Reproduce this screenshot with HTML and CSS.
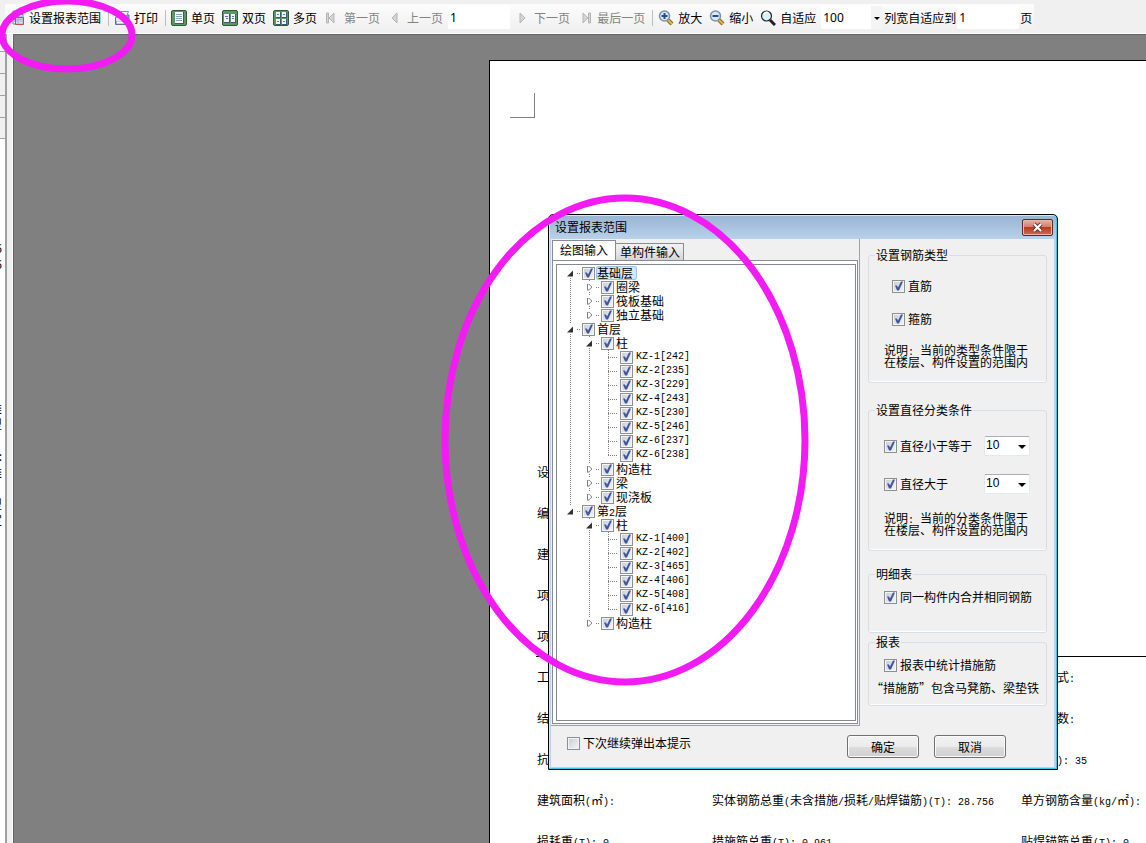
FILE: index.html
```html
<!DOCTYPE html>
<html lang="zh-CN">
<head>
<meta charset="utf-8">
<title>设置报表范围</title>
<link rel="stylesheet" href="styles.css">
</head>
<body>
<div class="app">
  <header class="toolbar">
    <div class="strip">
      <button class="tool"><svg width="14" height="16" viewBox="0 0 14 16"><path d="M3 1h10v13H3z" fill="#e9f0f8" stroke="#6f88a8"/><path d="M1 6h12v6H1z" fill="#a9bfda"/><path d="M3 4.500h10M0 9.500h13M8 1v14" stroke="#6f88a8"/><path d="M5.500 7.500h8v7h-8z" fill="#c9d3e6" fill-opacity=".6" stroke="#d04848"/></svg>设置报表范围</button>
      <span class="sep"></span>
      <button class="tool"><svg width="16" height="16" viewBox="0 0 16 16"><path d="M1.500 7.500 4 5h11v6l-3 3.500H1.500z" fill="#8fa3cc" stroke="#5d7199"/><path d="M4.500 7 7 1.500h7.500L12 7z" fill="#fff" stroke="#7d8fae"/><path d="M2 8h10v3H2z" fill="#dfe7f4"/><path d="M3 12.500h8" stroke="#fff" stroke-width="2"/></svg>打印</button>
      <span class="sep"></span>
      <button class="tool"><svg width="16" height="16" viewBox="0 0 16 16"><rect x=".5" y=".5" width="15" height="15" rx="1.500" fill="#5f9560" stroke="#2c5a34"/><path d="M4 2h9v12H4z" fill="#40566e"/><path d="M4 2h8v11H4z" fill="#fff"/><path d="M5 4.500h6M5 6.500h6M5 8.500h6M5 10.500h6" stroke="#8ba0c8"/></svg>单页</button>
      <button class="tool"><svg width="16" height="16" viewBox="0 0 16 16"><rect x=".5" y=".5" width="15" height="15" rx="1.500" fill="#5f9560" stroke="#2c5a34"/><path d="M2 4h6v9H2zM9 4h5v9H9z" fill="#40566e"/><path d="M2 4h5v8H2zM9 4h4v8H9z" fill="#eef2fb"/><path d="M3 6.500h3M4 8.500h2M10 6.500h2M10 8.500h2" stroke="#5c74a8"/></svg>双页</button>
      <button class="tool"><svg width="16" height="16" viewBox="0 0 16 16"><rect x=".5" y=".5" width="15" height="15" rx="1.500" fill="#5f9560" stroke="#2c5a34"/><path d="M3 2h5v6H3zM9 2h5v6H9zM3 9h5v6H3zM9 9h5v6H9z" fill="#40566e"/><path d="M3 2h4v5H3zM9 2h4v5H9zM3 9h4v5H3zM9 9h4v5H9z" fill="#eef2fb"/><path d="M4 4.500h2M10 4.500h2M4 11.500h2M10 11.500h2" stroke="#5c74a8"/></svg>多页</button>
      <button class="tool" disabled><svg width="16" height="16" viewBox="0 0 16 16"><path d="M2.500 3h2v10h-2zM10 3v10L5 8z" fill="#d4d4d4" stroke="#b5b5b5"/></svg>第一页</button>
      <button class="tool" disabled><svg width="16" height="16" viewBox="0 0 16 16"><path d="M10 3v10L5 8z" fill="#d4d4d4" stroke="#b5b5b5"/></svg>上一页</button>
      <input class="num" type="text" value="1" aria-label="页码">
      <button class="tool" disabled><svg width="16" height="16" viewBox="0 0 16 16"><path d="M6 3v10l5-5z" fill="#d4d4d4" stroke="#b5b5b5"/></svg>下一页</button>
      <button class="tool" disabled><svg width="16" height="16" viewBox="0 0 16 16"><path d="M6 3v10l5-5zM11.500 3h2v10h-2z" fill="#d4d4d4" stroke="#b5b5b5"/></svg>最后一页</button>
      <span class="sep"></span>
      <button class="tool"><svg width="16" height="16" viewBox="0 0 16 16"><path d="m10 10 4 4" stroke="#8a6a1c" stroke-width="4"/><path d="m10 10 4 4" stroke="#e2b94a" stroke-width="2"/><circle cx="6.500" cy="6" r="5" fill="#dbe8f8" stroke="#7a90b0" stroke-width="1.500"/><path d="M3.500 6h6M6.500 3v6" stroke="#2c4a86" stroke-width="2"/></svg>放大</button>
      <button class="tool"><svg width="16" height="16" viewBox="0 0 16 16"><path d="m10 10 4 4" stroke="#8a6a1c" stroke-width="4"/><path d="m10 10 4 4" stroke="#e2b94a" stroke-width="2"/><circle cx="6.500" cy="6" r="5" fill="#dbe8f8" stroke="#7a90b0" stroke-width="1.500"/><path d="M3.500 6h6" stroke="#2c4a86" stroke-width="2"/></svg>缩小</button>
      <button class="tool"><svg width="16" height="16" viewBox="0 0 16 16"><path d="m10 10 5 5" stroke="#222" stroke-width="3"/><circle cx="6.500" cy="6" r="5" fill="#d8f1fb" stroke="#222" stroke-width="1.200"/><path d="M4 4c1-2 3-2 4-1" stroke="#fff" fill="none" stroke-width="1.500"/></svg>自适应</button>
      <span class="combo zoom"><select aria-label="缩放比例"><option>100</option></select></span>
      <label class="fit">列宽自适应到<input class="num" type="text" value="1"><span>页</span></label>
    </div>
  </header>

  <div class="workspace">
    <aside class="side">
      <div class="heads"><i></i><i></i><i></i><i></i></div>
      <div class="entries">
        <span>6</span><span>6</span><span class="far">类</span><span>型</span><span class="next">:</span><span>类</span><span class="next">型</span><span>定</span>
      </div>
    </aside>
    <main class="viewport">
      <article class="page">
        <div class="corner"></div>
        <div class="rows head">
          <div class="row"><span>设</span></div>
          <div class="row"><span>编</span></div>
          <div class="row"><span>建</span></div>
          <div class="row"><span>项</span></div>
          <div class="row"><span>项</span></div>
        </div>
        <div class="rows">
          <div class="row"><span>工</span><span></span><span class="tail">式<b>:</b></span></div>
          <div class="row"><span>结</span><span></span><span class="tail">数<b>:</b></span></div>
          <div class="row"><span>抗</span><span></span><span class="tail"><b>): 35</b></span></div>
          <div class="row"><span>建筑面积<b>(</b>㎡<b>):</b></span><span>实体钢筋总重<b>(</b>未含措施<b>/</b>损耗<b>/</b>贴焊锚筋<b>)(T): 28.756</b></span><span>单方钢筋含量<b>(kg/</b>㎡<b>):</b></span></div>
          <div class="row"><span>损耗重<b>(T): 0</b></span><span>措施筋总重<b>(T): 0.961</b></span><span>贴焊锚筋总重<b>(T): 0</b></span></div>
        </div>
      </article>
    </main>
  </div>
</div>

<section class="dialog" role="dialog" aria-labelledby="dlg-title">
  <header class="titlebar">
    <h1 id="dlg-title">设置报表范围</h1>
    <button class="close" aria-label="关闭"><svg width="13" height="11" viewBox="0 0 13 11"><path d="m3 2 7 7M10 2 3 9" stroke="#5c3b3b" stroke-width="4"/><path d="m3 2 7 7M10 2 3 9" stroke="#fff" stroke-width="2"/></svg></button>
  </header>
  <div class="client">
    <div class="panes">
      <div class="left">
        <div class="tabs" role="tablist">
          <button class="tab on" role="tab" aria-selected="true">绘图输入</button>
          <button class="tab" role="tab" aria-selected="false">单构件输入</button>
        </div>
        <div class="tabpage">
          <ul class="tree">
            <li><div class="node"><i class="open"></i><label><input type="checkbox" checked><span class="sel">基础层</span></label></div>
              <ul>
                <li><div class="node"><i class="shut"></i><label><input type="checkbox" checked><span>圈梁</span></label></div></li>
                <li><div class="node"><i class="shut"></i><label><input type="checkbox" checked><span>筏板基础</span></label></div></li>
                <li><div class="node"><i class="shut"></i><label><input type="checkbox" checked><span>独立基础</span></label></div></li>
              </ul>
            </li>
            <li><div class="node"><i class="open"></i><label><input type="checkbox" checked><span>首层</span></label></div>
              <ul>
                <li><div class="node"><i class="open"></i><label><input type="checkbox" checked><span>柱</span></label></div>
                  <ul>
                    <li><div class="node leaf"><label><input type="checkbox" checked><b>KZ-1[242]</b></label></div></li>
                    <li><div class="node leaf"><label><input type="checkbox" checked><b>KZ-2[235]</b></label></div></li>
                    <li><div class="node leaf"><label><input type="checkbox" checked><b>KZ-3[229]</b></label></div></li>
                    <li><div class="node leaf"><label><input type="checkbox" checked><b>KZ-4[243]</b></label></div></li>
                    <li><div class="node leaf"><label><input type="checkbox" checked><b>KZ-5[230]</b></label></div></li>
                    <li><div class="node leaf"><label><input type="checkbox" checked><b>KZ-5[246]</b></label></div></li>
                    <li><div class="node leaf"><label><input type="checkbox" checked><b>KZ-6[237]</b></label></div></li>
                    <li><div class="node leaf"><label><input type="checkbox" checked><b>KZ-6[238]</b></label></div></li>
                  </ul>
                </li>
                <li><div class="node"><i class="shut"></i><label><input type="checkbox" checked><span>构造柱</span></label></div></li>
                <li><div class="node"><i class="shut"></i><label><input type="checkbox" checked><span>梁</span></label></div></li>
                <li><div class="node"><i class="shut"></i><label><input type="checkbox" checked><span>现浇板</span></label></div></li>
              </ul>
            </li>
            <li><div class="node"><i class="open"></i><label><input type="checkbox" checked><span>第<b>2</b>层</span></label></div>
              <ul>
                <li><div class="node"><i class="open"></i><label><input type="checkbox" checked><span>柱</span></label></div>
                  <ul>
                    <li><div class="node leaf"><label><input type="checkbox" checked><b>KZ-1[400]</b></label></div></li>
                    <li><div class="node leaf"><label><input type="checkbox" checked><b>KZ-2[402]</b></label></div></li>
                    <li><div class="node leaf"><label><input type="checkbox" checked><b>KZ-3[465]</b></label></div></li>
                    <li><div class="node leaf"><label><input type="checkbox" checked><b>KZ-4[406]</b></label></div></li>
                    <li><div class="node leaf"><label><input type="checkbox" checked><b>KZ-5[408]</b></label></div></li>
                    <li><div class="node leaf"><label><input type="checkbox" checked><b>KZ-6[416]</b></label></div></li>
                  </ul>
                </li>
                <li><div class="node"><i class="shut"></i><label><input type="checkbox" checked><span>构造柱</span></label></div></li>
              </ul>
            </li>
          </ul>
        </div>
      </div>

      <div class="right">
        <fieldset class="group steel">
          <legend>设置钢筋类型</legend>
          <label class="check"><input type="checkbox" checked>直筋</label>
          <label class="check"><input type="checkbox" checked>箍筋</label>
          <p>说明<b>: </b>当前的类型条件限于<br>在楼层、构件设置的范围内</p>
        </fieldset>
        <fieldset class="group diameter">
          <legend>设置直径分类条件</legend>
          <div class="line"><label class="check"><input type="checkbox" checked>直径小于等于</label><span class="combo"><select aria-label="直径小于等于"><option>10</option></select></span></div>
          <div class="line"><label class="check"><input type="checkbox" checked>直径大于</label><span class="combo"><select aria-label="直径大于"><option>10</option></select></span></div>
          <p>说明<b>: </b>当前的分类条件限于<br>在楼层、构件设置的范围内</p>
        </fieldset>
        <fieldset class="group detail">
          <legend>明细表</legend>
          <label class="check"><input type="checkbox" checked>同一构件内合并相同钢筋</label>
        </fieldset>
        <fieldset class="group report">
          <legend>报表</legend>
          <label class="check"><input type="checkbox" checked>报表中统计措施筋</label>
          <p>“措施筋”包含马凳筋、梁垫铁</p>
        </fieldset>
      </div>
    </div>
    <footer class="actions">
      <label class="check"><input type="checkbox">下次继续弹出本提示</label>
      <button class="push">确定</button>
      <button class="push">取消</button>
    </footer>
  </div>
</section>

<svg class="marks" width="1146" height="843" viewBox="0 0 1146 843" aria-hidden="true">
  <ellipse cx="67" cy="35" rx="65" ry="34"/>
  <ellipse cx="625" cy="440" rx="180" ry="242"/>
</svg>
</body>
</html>
```
FILE: styles.css
```css
* { box-sizing: border-box; }
html, body { height: 100%; }
body, button, input, select {
  font-family: "Noto Sans CJK SC", sans-serif;
  font-size: 12px;
  line-height: 16px;
  color: #000;
}
body { margin: 0; overflow: hidden; background: #f0f0f0; }
button, input, select { margin: 0; padding: 0; border: 0; border-radius: 0; }
ul, p, h1 { margin: 0; padding: 0; list-style: none; font-size: 12px; font-weight: 400; }
b { font: 400 10px/0 "Liberation Mono", monospace; white-space: pre; }
svg { display: block; flex: none; }

.app { display: flex; flex-direction: column; height: 100vh; }

/* toolbar */
.toolbar { flex: none; height: 34px; padding: 4px 0 0 5px; border-bottom: 1px solid #fff; }
.strip {
  display: inline-flex; align-items: center; height: 27px; padding: 0 2px 0 5px;
  background: linear-gradient(#fdfdfd, #efefef); white-space: nowrap;
}
.tool { display: flex; align-items: center; gap: 4px; flex: none; background: none; }
.tool:first-child { gap: 5px; }
.tool:disabled { color: #838383; }
.tool + .tool { margin-left: 7px; }
.sep { width: 1px; height: 16px; margin: 0 5px 0 7px; background: #bdbdbd; }
.num { width: 62px; height: 23px; padding: 0 2px; margin: 0 4px 0 5px; background: #fff; font-family: "Noto Sans", sans-serif; }
.fit { display: flex; align-items: center; }
.fit .num { margin: 0 1px 0 1px; }

.combo { position: relative; display: block; flex: none; }
.combo select {
  appearance: none; width: 46px; height: 20px; padding: 0 1px 2px; background: #fff;
  border: 1px solid #e3e9ef; border-top-color: #abadb3; border-radius: 2px;
  line-height: 16px; font-family: "Liberation Sans", sans-serif;
}
.combo::after {
  content: ""; position: absolute; right: 4px; top: 9px; pointer-events: none;
  border: 4px solid transparent; border-top-color: #000; border-bottom: 0;
}
.zoom { margin: 0 1px 0 5px; }
.zoom select {
  width: 62px; height: 23px; padding: 0 2px; border: 0; font-family: "Noto Sans", sans-serif;
  background: linear-gradient(90deg, #fff 50px, #f4f4f4 50px);
}
.zoom::after { right: 3px; top: 11px; border-width: 3px; border-bottom: 0; }

/* workspace */
.workspace { display: flex; flex: 1; min-height: 0; }
.side { flex: none; width: 7px; margin-right: 6px; border-right: 2px solid #a0a0a0; background: #fff; overflow: hidden; }
.heads { padding-top: 17px; background: #f0f0f0; }
.heads i { display: block; height: 22px; border-top: 1px solid #a0a0a0; }
.heads i:last-child { border-bottom: 1px solid #a0a0a0; }
.entries { display: flex; flex-direction: column; align-items: flex-end; padding: 101px 3px 0 0; }
.entries .far { margin-top: 128px; }
.entries .next { margin-top: 16px; }
.viewport {
  flex: 1; min-width: 0; padding: 25px 0 0 475px; overflow: hidden;
  background: #808080; border: 1px solid #646464; border-width: 1px 0 0 1px;
  box-shadow: -1px 0 #fff;
}

/* printed page */
.page { min-height: 100%; border: 1px solid #000; border-width: 1px 0 0 1px; background: #fff; }
.page::before { content: ""; display: block; height: 32px; }
.corner { width: 25px; height: 25px; margin: 0 0 333px 20px; border: 1px solid #808080; border-width: 0 1px 1px 0; }
.rows { margin-left: 46px; padding-left: 1px; }
.rows.head { border-bottom: 1px solid #000; }
.row { display: grid; grid-template-columns: 175px 309px 1fr; align-items: center; height: 41px; white-space: nowrap; }
.head + .rows .row:first-child { height: 40px; }
.tail { padding-left: 36px; }

/* dialog */
.dialog {
  position: absolute; left: 548px; top: 214px; width: 510px; padding: 0 3px 2px 2px;
  border: 1px solid #000; border-radius: 5px 5px 0 0;
  background: linear-gradient(#98b4d1, #b9d1ea 24px);
  box-shadow: inset -1px -1px #2fc8ee, inset 1px 1px #d5e5f5;
}
.titlebar { display: flex; align-items: center; justify-content: space-between; height: 24px; padding: 0 1px 0 4px; }
.close {
  display: flex; align-items: center; justify-content: center; width: 31px; height: 17px;
  border: 1px solid #592a28; border-radius: 2px;
  background: linear-gradient(#e9b0a3, #d4806c 45%, #b93a1e 50%, #d06a4c);
  box-shadow: inset 0 0 0 1px #e8b8ac;
}
.client { background: #f0f0f0; }
.panes { display: flex; }
.left {
  display: flex; flex-direction: column; flex: 1; padding: 1px;
  border: 1px solid #a0a0a0; border-width: 0 1px 1px 0;
}
.tabs { display: flex; align-items: flex-end; height: 20px; }
.tab {
  height: 17px; padding: 0 3px 1px 4px; border: 1px solid #898c95; border-left: 0; border-bottom: 0;
  background: linear-gradient(#f2f2f2, #e6e6e6 50%, #d4d4d4); line-height: 15px;
}
.tab.on { height: 20px; padding: 0 7px 2px; border-left: 1px solid #898c95; background: #fff; }
.tabpage {
  display: flex; flex: 1; padding: 3px 1px 2px 3px; background: #fff;
  border: 1px solid #898c95;
}
.tree { flex: 1; padding: 1px 0 0 10px; border: 1px solid #828790; }
.tree ul { padding-left: 19px; }
.tree li { position: relative; }
.tree li::before {
  content: ""; position: absolute; left: 3px; top: 0; bottom: 0; width: 1px;
  background: repeating-linear-gradient(#808080 0 1px, #fff 1px 2px);
}
.tree li:last-child::before { bottom: auto; height: 8px; }
.tree > li:first-child::before { top: 8px; }
.node { position: relative; display: flex; align-items: center; height: 14px; line-height: 14px; }
.node label { display: flex; align-items: center; gap: 2px; white-space: nowrap; }
.node label > b { padding-left: 1px; line-height: 16px; }
.node i { display: flex; align-items: center; width: 15px; height: 10px; background: linear-gradient(#fff, #fff) 0 0 / 8px 10px no-repeat; }
.node i::before { content: ""; width: 7px; height: 7px; }
.node i::after { content: ""; width: 4px; height: 1px; margin-left: 3px; background: repeating-linear-gradient(90deg, #808080 0 1px, #fff 1px 2px); }
.open::before { background: #333; clip-path: polygon(6px 1px, 6px 7px, 0 7px); }
.shut::before { background: #808080; clip-path: polygon(evenodd, 1px 0, 3px 0, 6px 3px, 6px 4px, 3px 7px, 1px 7px, 1px 0, 2px 1px, 2px 6px, 3px 6px, 5px 4px, 5px 3px, 3px 1px, 2px 1px); }
.leaf { padding-left: 15px; }
.leaf::before { content: ""; position: absolute; left: 3px; top: 7px; width: 10px; height: 1px; background: repeating-linear-gradient(90deg, #808080 0 1px, #fff 1px 2px); }
.sel { padding-right: 3px; border-radius: 2px; background: #d3e8fc; box-shadow: 0 0 0 1px #99c4ef; height: 12px; line-height: 12px; }

input[type="checkbox"] {
  appearance: none; flex: none; width: 13px; height: 13px; border: 1px solid #8e8f8f;
  background: linear-gradient(135deg, #c6ccd4, #f6f6f6); box-shadow: inset 0 0 0 1px #f4f4f4;
}
input[type="checkbox"]:checked::before {
  content: ""; display: block; width: 11px; height: 11px; background: #4256a0;
  clip-path: polygon(2px 5px, 4px 5px, 5px 7px, 8px 1px, 10px 1px, 6px 10px, 4px 10px);
}

.right { display: flex; flex-direction: column; width: 194px; padding: 8px 7px 20px 8px; }
.group {
  min-width: 0; margin: 0; padding: 0 0 0 15px; border: 1px solid #d5dfe5; border-radius: 3px;
  box-shadow: inset 0 -1px #fff;
}
legend { margin-left: -9px; padding: 0 1px; }
.check { display: flex; align-items: center; gap: 3px; white-space: nowrap; }
.group p { line-height: 12px; white-space: nowrap; }
.steel { padding-top: 15px; padding-bottom: 14px; margin-bottom: 19px; }
.steel .check { margin: 0 0 17px 8px; }
.diameter { padding-top: 18px; padding-bottom: 14px; margin-bottom: 15px; }
.line { display: flex; align-items: center; justify-content: space-between; margin-bottom: 18px; padding-right: 16px; }
.detail { padding-top: 7px; padding-bottom: 27px; }
.report { padding-top: 7px; padding-bottom: 9px; margin-top: 1px; }
.report p { margin: 7px 0 0 -13px; line-height: 16px; }

.actions { display: flex; align-items: flex-start; gap: 15px; padding: 9px 48px 9px 16px; }
.actions .check { margin-right: auto; }
.push {
  width: 72px; height: 23px; border: 1px solid #707070; border-radius: 3px;
  background: linear-gradient(#f2f2f2, #ebebeb 50%, #dddddd 50%, #cfcfcf);
  box-shadow: inset 0 0 0 1px #fbfbfb;
}

/* highlighter strokes drawn over the window */
.marks { position: absolute; left: 0; top: 0; pointer-events: none; fill: none; stroke: #f31bf3; stroke-width: 7; }
```
